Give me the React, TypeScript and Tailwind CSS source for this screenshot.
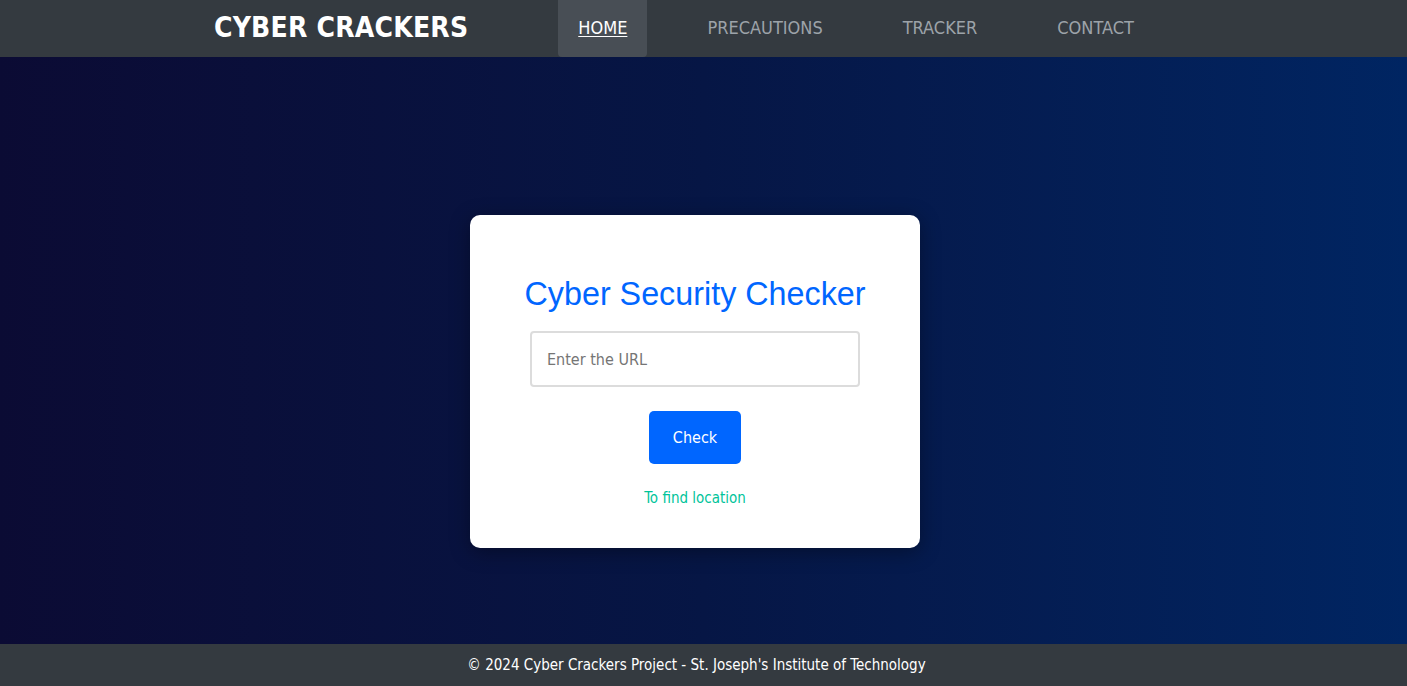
import React from 'react';

const navItems = ['HOME', 'PRECAUTIONS', 'TRACKER', 'CONTACT'];

const App: React.FC = () => {
  const tahoma = { fontFamily: '"DejaVu Sans Condensed", "DejaVu Sans", sans-serif' };

  return (
    <div className="min-h-screen flex flex-col" style={tahoma}>
      {/* Header */}
      <header className="h-[57px] bg-[#343a40] flex items-stretch shrink-0">
        <div className="pl-[214px] flex items-center pb-[1px]">
          <span className="text-white font-bold text-[28px] leading-none tracking-[0.2px]">
            CYBER CRACKERS
          </span>
        </div>
        <nav className="ml-[90px] flex items-stretch gap-10">
          {navItems.map((item, i) => (
            <a
              key={item}
              href="#"
              className={
                i === 0
                  ? 'px-5 pb-[2px] flex items-center text-[18px] text-white underline underline-offset-2 bg-[#484e55] rounded-b-[4px]'
                  : 'px-5 pb-[2px] flex items-center text-[18px] text-[#9da3a9]'
              }
            >
              {item}
            </a>
          ))}
        </nav>
      </header>

      {/* Main */}
      <main className="flex-1 bg-linear-to-r from-[#0b0b34] via-[#061645] to-[#002562] flex justify-center items-start pt-[158px] pb-[96px] pr-[17px]">
        <div className="w-[450px] bg-white rounded-[10px] shadow-[0_4px_20px_rgba(0,0,0,0.35)] px-10 pt-10 pb-[41px] flex flex-col items-center">
          <h1
            className="mt-[20px] text-[32.3px] leading-[38px] text-[#0066ff]"
            style={{ fontFamily: '"Liberation Sans", Arial, sans-serif' }}
          >
            Cyber Security Checker
          </h1>
          <input
            type="text"
            placeholder="Enter the URL"
            className="mt-[18px] w-[330px] h-[56px] border-2 border-[#dcdcdc] rounded-[4px] px-[15px] text-[16px] placeholder:text-[#757575] outline-none"
          />
          <button className="mt-[24px] w-[92px] h-[53px] bg-[#0066ff] text-white text-[16px] rounded-[5px]">
            Check
          </button>
          <a href="#" className="mt-[26px] text-[15px] leading-[17px] text-[#00c49a]">
            To find location
          </a>
        </div>
      </main>

      {/* Footer */}
      <footer className="h-[42px] bg-[#343a40] flex items-center justify-center shrink-0">
        <p className="text-white text-[15px] pr-[14px]">
          © 2024 Cyber Crackers Project - St. Joseph's Institute of Technology
        </p>
      </footer>
    </div>
  );
};

export default App;
